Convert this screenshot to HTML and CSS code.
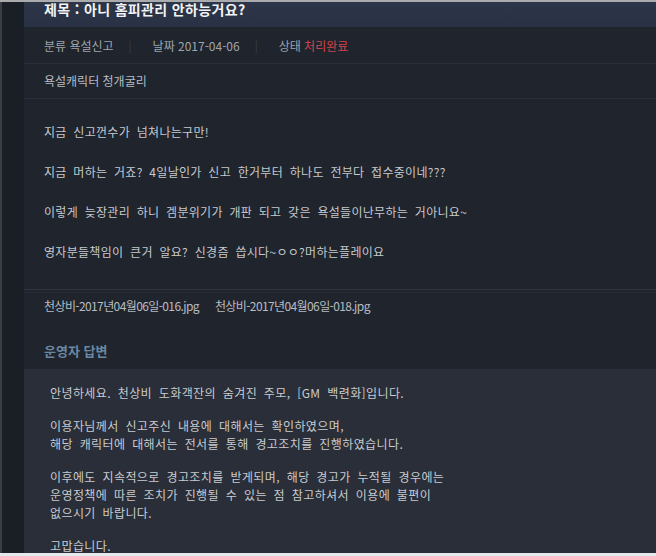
FILE: index.html
```html
<!DOCTYPE html>
<html lang="ko">
<head>
    <meta charset="UTF-8">
    <meta name="viewport" content="width=device-width, initial-scale=1.0">
    <title>신고 상세</title>
    <link rel="stylesheet" href="styles.css">
</head>
<body>
    <div class="frame">
        <div class="side"></div>
        <div class="main">
            <div class="title-bar">
                <h2>제목 : 아니 홈피관리 안하능거요?</h2>
            </div>

            <div class="meta">
                <span>분류 욕설신고</span>
                <span class="sep">|</span>
                <span>날짜 2017-04-06</span>
                <span class="sep">|</span>
                <span>상태 <em class="state">처리완료</em></span>
            </div>

            <div class="target">욕설캐릭터 청개굴리</div>

            <div class="content">
                <p>지금 신고껀수가 넘쳐나는구만!</p>
                <p>지금 머하는 거죠? 4일날인가 신고 한거부터 하나도 전부다 접수중이네???</p>
                <p>이렇게 늦장관리 하니 겜분위기가 개판 되고 갖은 욕설들이난무하는 거아니요~</p>
                <p>영자분들책임이 큰거 알요? 신경즘 씁시다~ㅇㅇ?머하는플레이요</p>
            </div>

            <div class="files">
                <span>천상비-2017년04월06일-016.jpg</span>
                <span>천상비-2017년04월06일-018.jpg</span>
            </div>

            <h3 class="answer-title">운영자 답변</h3>

            <div class="answer">
                <p>안녕하세요. 천상비 도화객잔의 숨겨진 주모, [GM 백련화]입니다.</p>
                <p>이용자님께서 신고주신 내용에 대해서는 확인하였으며,<br>해당 캐릭터에 대해서는 전서를 통해 경고조치를 진행하였습니다.</p>
                <p>이후에도 지속적으로 경고조치를 받게되며, 해당 경고가 누적될 경우에는<br>운영정책에 따른 조치가 진행될 수 있는 점 참고하셔서 이용에 불편이<br>없으시기 바랍니다.</p>
                <p>고맙습니다.</p>
            </div>
        </div>
    </div>
</body>
</html>
```

FILE: styles.css
```css
body {
    margin: 0;
    background-color: #e6e9ec;
    font-family: "Noto Sans CJK KR", "Noto Sans", sans-serif;
    font-size: 12px;
    overflow: hidden;
}

.frame {
    display: flex;
    height: 551px;
    border-top: 2px solid #a9abad;
    background-color: #1f242d;
    overflow: hidden;
}

.side {
    width: 22px;
    flex-shrink: 0;
    border-left: 2px solid #3a3e44;
    background-color: #1a1e25;
}

.main {
    flex: 1;
    min-width: 0;
}

.title-bar {
    height: 25px;
    padding-left: 20px;
    background: linear-gradient(#2d3548, #293144);
}

.title-bar h2 {
    margin: 0;
    font-size: 14px;
    line-height: 14px;
    letter-spacing: 0.35px;
    color: #f2f3f5;
    font-weight: bold;
}

.meta {
    display: flex;
    align-items: center;
    height: 36px;
    padding-left: 20px;
    color: #a0a4aa;
    border-bottom: 1px solid #2a2f39;
}

.meta .sep {
    margin: 0 21px 0 15px;
    color: #3d424b;
    font-size: 11px;
}

.state {
    font-style: normal;
    color: #d0454f;
}

.target {
    height: 34px;
    line-height: 34px;
    padding-left: 20px;
    color: #b8bcc2;
    border-bottom: 1px solid #2a2f39;
}

.content {
    padding: 24px 20px 28px;
    color: #c6c9ce;
    word-spacing: 3px;
    letter-spacing: 0.3px;
    border-bottom: 1px solid #2e3440;
}

.content p {
    margin: 0 0 22px;
    line-height: 18px;
}

.content p:last-child {
    margin-bottom: 0;
}

.files {
    display: flex;
    gap: 16px;
    padding: 4px 20px 0;
    line-height: 18px;
    letter-spacing: -0.6px;
    color: #b8bcc2;
    border-top: 1px solid #272c36;
    margin-top: 2px;
}

.answer-title {
    margin: 0;
    padding: 27px 20px 9px;
    font-size: 13px;
    line-height: 18px;
    color: #6a88a2;
}

.answer {
    padding: 15px 26px;
    background-color: #292e38;
    color: #c8cbd0;
    word-spacing: 3px;
    letter-spacing: 0.4px;
}

.answer p {
    margin: 0 0 15px;
    line-height: 18px;
}
```
